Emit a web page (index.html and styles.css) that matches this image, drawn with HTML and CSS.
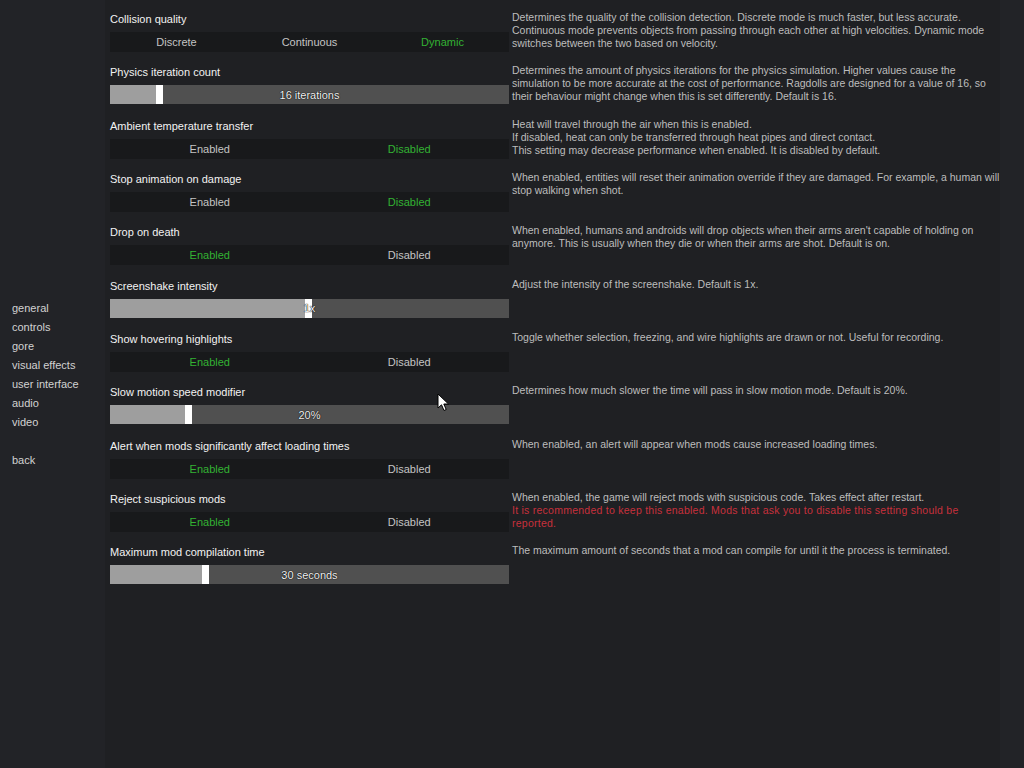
FILE: index.html
```html
<!DOCTYPE html>
<html>
<head>
    <title>Settings</title>
    <link rel="stylesheet" href="styles.css">
</head>
<body>
    <div class="page">
        <nav class="side-menu">
            <div class="menu-item">general</div>
            <div class="menu-item">controls</div>
            <div class="menu-item">gore</div>
            <div class="menu-item">visual effects</div>
            <div class="menu-item">user interface</div>
            <div class="menu-item">audio</div>
            <div class="menu-item">video</div>
            <div class="menu-item back">back</div>
        </nav>

        <main class="settings">
            <div class="setting">
                <div class="control">
                    <div class="setting-label">Collision quality</div>
                    <div class="options">
                        <span class="option">Discrete</span>
                        <span class="option">Continuous</span>
                        <span class="option selected">Dynamic</span>
                    </div>
                </div>
                <div class="description">Determines the quality of the collision detection. Discrete mode is much faster, but less accurate. Continuous mode prevents objects from passing through each other at high velocities. Dynamic mode switches between the two based on velocity.</div>
            </div>

            <div class="setting">
                <div class="control">
                    <div class="setting-label">Physics iteration count</div>
                    <div class="slider">
                        <div class="slider-fill" style="width: 46px"></div>
                        <span class="slider-value">16 iterations</span>
                    </div>
                </div>
                <div class="description">Determines the amount of physics iterations for the physics simulation. Higher values cause the simulation to be more accurate at the cost of performance. Ragdolls are designed for a value of 16, so their behaviour might change when this is set differently. Default is 16.</div>
            </div>

            <div class="setting">
                <div class="control">
                    <div class="setting-label">Ambient temperature transfer</div>
                    <div class="options">
                        <span class="option">Enabled</span>
                        <span class="option selected">Disabled</span>
                    </div>
                </div>
                <div class="description">Heat will travel through the air when this is enabled.<br>If disabled, heat can only be transferred through heat pipes and direct contact.<br>This setting may decrease performance when enabled. It is disabled by default.</div>
            </div>

            <div class="setting">
                <div class="control">
                    <div class="setting-label">Stop animation on damage</div>
                    <div class="options">
                        <span class="option">Enabled</span>
                        <span class="option selected">Disabled</span>
                    </div>
                </div>
                <div class="description">When enabled, entities will reset their animation override if they are damaged. For example, a human will stop walking when shot.</div>
            </div>

            <div class="setting">
                <div class="control">
                    <div class="setting-label">Drop on death</div>
                    <div class="options">
                        <span class="option selected">Enabled</span>
                        <span class="option">Disabled</span>
                    </div>
                </div>
                <div class="description">When enabled, humans and androids will drop objects when their arms aren't capable of holding on anymore. This is usually when they die or when their arms are shot. Default is on.</div>
            </div>

            <div class="setting">
                <div class="control">
                    <div class="setting-label">Screenshake intensity</div>
                    <div class="slider">
                        <div class="slider-fill" style="width: 195px"></div>
                        <span class="slider-value">1x</span>
                    </div>
                </div>
                <div class="description">Adjust the intensity of the screenshake. Default is 1x.</div>
            </div>

            <div class="setting">
                <div class="control">
                    <div class="setting-label">Show hovering highlights</div>
                    <div class="options">
                        <span class="option selected">Enabled</span>
                        <span class="option">Disabled</span>
                    </div>
                </div>
                <div class="description">Toggle whether selection, freezing, and wire highlights are drawn or not. Useful for recording.</div>
            </div>

            <div class="setting">
                <div class="control">
                    <div class="setting-label">Slow motion speed modifier</div>
                    <div class="slider">
                        <div class="slider-fill" style="width: 75px"></div>
                        <span class="slider-value">20%</span>
                    </div>
                </div>
                <div class="description">Determines how much slower the time will pass in slow motion mode. Default is 20%.</div>
            </div>

            <div class="setting">
                <div class="control">
                    <div class="setting-label">Alert when mods significantly affect loading times</div>
                    <div class="options">
                        <span class="option selected">Enabled</span>
                        <span class="option">Disabled</span>
                    </div>
                </div>
                <div class="description">When enabled, an alert will appear when mods cause increased loading times.</div>
            </div>

            <div class="setting">
                <div class="control">
                    <div class="setting-label">Reject suspicious mods</div>
                    <div class="options">
                        <span class="option selected">Enabled</span>
                        <span class="option">Disabled</span>
                    </div>
                </div>
                <div class="description">When enabled, the game will reject mods with suspicious code. Takes effect after restart.<br><span class="warning">It is recommended to keep this enabled. Mods that ask you to disable this setting should be reported.</span></div>
            </div>

            <div class="setting">
                <div class="control">
                    <div class="setting-label">Maximum mod compilation time</div>
                    <div class="slider">
                        <div class="slider-fill" style="width: 92px"></div>
                        <span class="slider-value">30 seconds</span>
                    </div>
                </div>
                <div class="description">The maximum amount of seconds that a mod can compile for until it the process is terminated.</div>
            </div>
        </main>
    </div>

    <svg class="cursor" width="14" height="20" viewBox="0 0 14 20">
        <path d="M1 1 L1 15 L4.5 11.8 L7 17.5 L9.2 16.5 L6.8 11 L11.5 11 Z" fill="#fff" stroke="#000" stroke-width="1"/>
    </svg>
</body>
</html>
```

FILE: styles.css
```css
body {
    margin: 0;
    background: #222327;
    color: #c8c8c8;
    font-family: "Liberation Sans", Arial, sans-serif;
    font-size: 11px;
    width: 1024px;
    height: 768px;
    overflow: hidden;
}
.page {
    display: flex;
    height: 768px;
}
.side-menu {
    width: 98px;
    padding: 299px 0 0 12px;
}
.menu-item {
    line-height: 19px;
    color: #d2d2d2;
}
.menu-item.back {
    margin-top: 19px;
}
.settings {
    width: 890px;
    margin-left: -5px;
    padding: 10px 0 0 5px;
    height: 758px;
    background: #1f2023;
}
.setting {
    display: grid;
    grid-template-columns: 399px 490px;
    column-gap: 3px;
    height: 53.33px;
}
.setting-label {
    line-height: 18px;
    color: #f2f2f2;
    margin-bottom: 4px;
}
.options {
    display: flex;
    height: 20px;
    background: #18191b;
}
.option {
    flex: 1;
    text-align: center;
    line-height: 20px;
    color: #c4c4c4;
}
.option.selected {
    color: #33b233;
}
.slider {
    position: relative;
    height: 19px;
    background: #505050;
    display: flex;
    justify-content: center;
    align-items: center;
}
.slider-fill {
    position: absolute;
    left: 0;
    top: 0;
    bottom: 0;
    background: #9e9e9e;
}
.slider-fill::after {
    content: "";
    position: absolute;
    top: 0;
    bottom: 0;
    right: -7px;
    width: 7px;
    background: #fff;
}
.slider-value {
    position: relative;
    color: #f2f2f2;
    text-shadow: 0 0 1px #000, 0 0 1px #000;
}
.description {
    font-size: 10.5px;
    line-height: 13px;
    color: #bdbdbd;
    padding-top: 1px;
}
.warning {
    color: #c7303c;
    letter-spacing: 0.25px;
}
.cursor {
    position: absolute;
    left: 437px;
    top: 393px;
}
```
